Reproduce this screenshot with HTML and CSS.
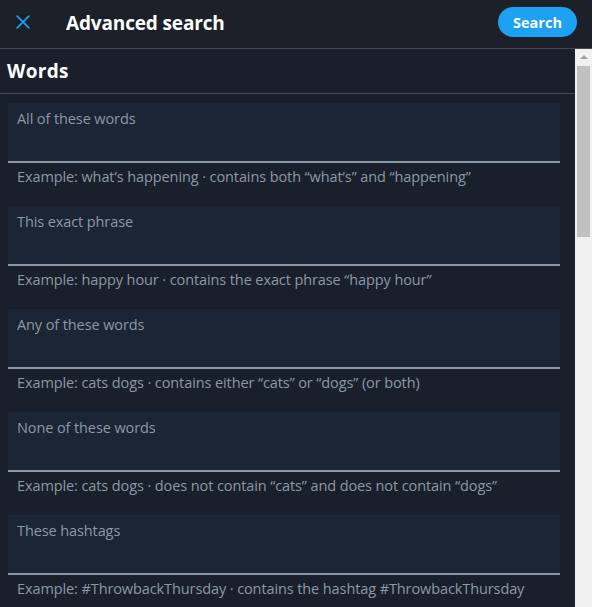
FILE: index.html
```html
<!DOCTYPE html>
<html>
<head>
<meta charset="utf-8">
<link rel="stylesheet" href="styles.css">
</head>
<body>
<div class="app">
  <header class="topbar">
    <button class="close" aria-label="Close">
      <svg viewBox="0 0 24 24" width="20" height="20"><path d="M5 5 L19 19 M19 5 L5 19" stroke="#1da1f2" stroke-width="2" stroke-linecap="round" fill="none"/></svg>
    </button>
    <h1 class="title">Advanced search</h1>
    <button class="search-btn">Search</button>
  </header>
  <div class="body">
    <main class="content">
      <h2 class="section-title">Words</h2>
      <div class="fields">
        <div class="field">
          <div class="input"><span class="label">All of these words</span></div>
          <div class="hint">Example: what’s happening · contains both “what’s” and “happening”</div>
        </div>
        <div class="field">
          <div class="input"><span class="label">This exact phrase</span></div>
          <div class="hint">Example: happy hour · contains the exact phrase “happy hour”</div>
        </div>
        <div class="field">
          <div class="input"><span class="label">Any of these words</span></div>
          <div class="hint">Example: cats dogs · contains either “cats” or “dogs” (or both)</div>
        </div>
        <div class="field">
          <div class="input"><span class="label">None of these words</span></div>
          <div class="hint">Example: cats dogs · does not contain “cats” and does not contain “dogs”</div>
        </div>
        <div class="field">
          <div class="input"><span class="label">These hashtags</span></div>
          <div class="hint">Example: #ThrowbackThursday · contains the hashtag #ThrowbackThursday</div>
        </div>
      </div>
    </main>
    <div class="scrollbar">
      <div class="arrow"></div>
      <div class="thumb"></div>
    </div>
  </div>
</div>
</body>
</html>
```
FILE: styles.css
```css
* { box-sizing: border-box; }
html, body { margin: 0; padding: 0; }
body {
  background: #1a202b;
  font-family: "Open Sans", "Noto Sans", sans-serif;
  width: 592px;
  height: 607px;
  overflow: hidden;
}
.app { display: flex; flex-direction: column; height: 607px; }
.topbar {
  height: 49px;
  flex: none;
  display: flex;
  align-items: center;
  background: #1b2029;
  border-bottom: 1px solid #414953;
  padding: 0 15px 0 12px;
}
.close {
  width: 22px; height: 22px;
  padding: 0; border: 0; background: none;
  display: flex; align-items: center; justify-content: center;
  margin-top: -4px;
}
.title {
  margin: -3px 0 0 32px;
  font-size: 19px;
  font-weight: 700;
  color: #ffffff;
  flex: 1;
  letter-spacing: -0.15px;
}
.search-btn {
  border: 0;
  background: #1da1f2;
  color: #fff;
  font-family: inherit;
  font-weight: 700;
  font-size: 14.5px;
  height: 30px;
  width: 79px;
  border-radius: 15px;
  margin-top: -4px;
  padding: 0;
}
.body { flex: 1; display: flex; min-height: 0; }
.content { flex: 1; min-width: 0; overflow: hidden; }
.section-title {
  margin: 0;
  height: 45px;
  display: flex;
  align-items: center;
  padding-left: 7px;
  font-size: 19px;
  font-weight: 700;
  color: #fff;
  border-bottom: 1px solid #414953;
  letter-spacing: 0.3px;
}
.fields { padding: 9px 15px 0 8px; }
.field { margin-bottom: 18px; }
.input {
  height: 60px;
  background: #1b2533;
  border-bottom: 2px solid #8b98a5;
  padding: 4px 9px 0;
}
.label, .hint {
  font-size: 14.5px;
  line-height: 20px;
  color: #8b98a5;
  letter-spacing: -0.1px;
}
.hint { padding: 4px 9px 0; height: 25px; }
.scrollbar {
  width: 17px;
  flex: none;
  background: #f1f1f1;
  display: flex;
  flex-direction: column;
  align-items: center;
}
.arrow {
  margin-top: 6px;
  width: 0; height: 0;
  border-left: 4px solid transparent;
  border-right: 4px solid transparent;
  border-bottom: 4px solid #a3a3a3;
}
.thumb {
  margin-top: 7px;
  width: 13px;
  height: 171px;
  background: #c1c1c1;
}
```
